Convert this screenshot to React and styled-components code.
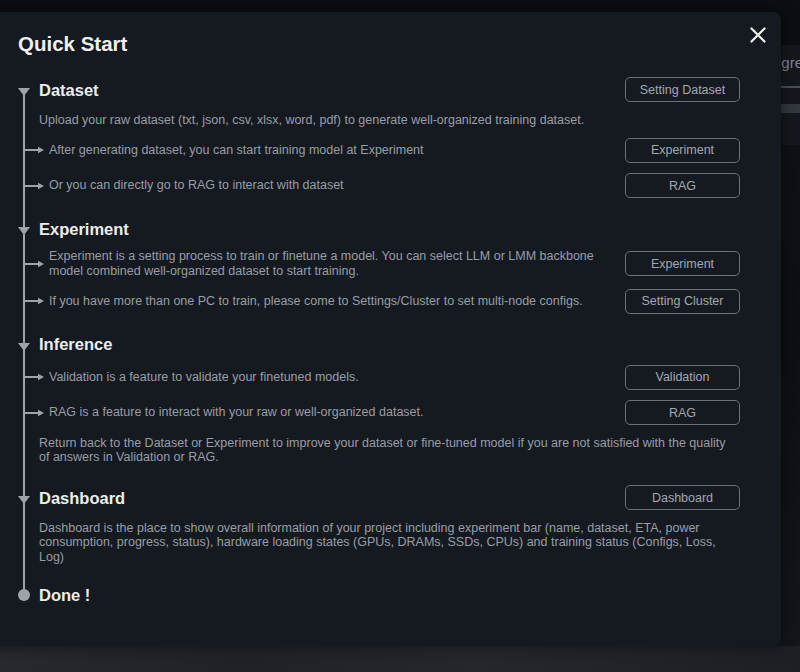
import React from 'react'
import styled, { createGlobalStyle } from 'styled-components'

const GlobalStyle = createGlobalStyle`
  html, body {
    margin: 0;
    padding: 0;
    background: #0d1015;
  }
  body {
    font-family: "Liberation Sans", Arial, sans-serif;
  }
`

// page behind the dialog
const Page = styled.div`
  position: relative;
  width: 800px;
  height: 672px;
  overflow: hidden;
  display: grid;
  grid-template-rows: 45px 100px 1fr 26px;
  background: #0d1015;
`

const TopBar = styled.div`
  background: #0b0e12;
`

const ProgressPanel = styled.div`
  background: #14181e;
  display: flex;
  flex-direction: column;
  padding: 9px 0 0 758px;
  overflow: hidden;
`

const PanelLabel = styled.div`
  font-size: 15px;
  color: #80848b;
  white-space: nowrap;
`

const PanelRule = styled.div`
  height: 2px;
  margin-top: 15px;
  background: #4a4f56;
`

const PanelBar = styled.div`
  height: 9px;
  margin-top: 16px;
  background: #33383e;
`

const Body = styled.div`
  background: linear-gradient(160deg, #10141a 0%, #0c0f13 60%, #12161b 100%);
`

const Footer = styled.div`
  background: linear-gradient(90deg, #26292d 0%, #1f2328 30%, #24282d 60%, #1c2025 100%);
`

// dialog
const Modal = styled.section`
  position: absolute;
  top: 12px;
  left: -12px;
  width: 793px;
  height: 634px;
  box-sizing: border-box;
  padding: 18px 41px 0 30px;
  background: #151a21;
  border-radius: 8px;
  box-shadow: 0 0 14px rgba(0, 0, 0, 0.55);
`

const Header = styled.header`
  display: flex;
  justify-content: space-between;
  align-items: center;
  height: 28px;
`

const Title = styled.h1`
  margin: 0;
  font-size: 20.5px;
  font-weight: bold;
  color: #f0f0f0;
  line-height: 28px;
`

const CloseButton = styled.button`
  align-self: flex-start;
  margin: -3px -26px 0 0;
  padding: 0;
  width: 16px;
  height: 16px;
  border: none;
  background: none;
  cursor: pointer;
  display: flex;
`

const Timeline = styled.div`
  position: relative;
  margin-top: 19px;
  display: flex;
  flex-direction: column;
  gap: 20.5px;

  &::before {
    content: '';
    position: absolute;
    left: 5px;
    top: 11px;
    bottom: 10px;
    width: 2px;
    background: #9ea3ac;
  }
`

const Section = styled.div`
  display: flex;
  flex-direction: column;
  gap: 10.5px;
`

const Row = styled.div`
  display: flex;
  align-items: center;
`

const Gutter = styled.div`
  flex: 0 0 ${p => (p.$wide ? 31 : 21)}px;
  display: flex;
  align-items: center;
  align-self: stretch;
`

const Heading = styled.h2`
  flex: 1;
  margin: 0;
  font-size: 16.5px;
  font-weight: bold;
  color: #ececec;
  line-height: 20px;
`

const Text = styled.p`
  flex: 1;
  margin: 0;
  padding-right: ${p => (p.$inset ? 10 : 0)}px;
  font-size: 12.5px;
  line-height: 14.5px;
  color: #999da5;
`

const StepButton = styled.button`
  flex: 0 0 115px;
  height: 25px;
  box-sizing: border-box;
  margin-left: 12px;
  border: 1.5px solid #6c7179;
  border-radius: 5px;
  background: transparent;
  color: #a3a7ae;
  font-family: "Liberation Sans", Arial, sans-serif;
  font-size: 12.5px;
  cursor: pointer;
`

const Triangle = () => (
  <svg width="12" height="8" viewBox="0 0 12 8" style={{ marginTop: 5 }}>
    <polygon points="0,0 12,0 6,8" fill="#9ea3ac" />
  </svg>
)

const Dot = () => (
  <svg width="12" height="12" viewBox="0 0 12 12">
    <circle cx="6" cy="6" r="6" fill="#9ea3ac" />
  </svg>
)

const Arrow = () => (
  <svg width="20" height="8" viewBox="0 0 20 8" style={{ marginLeft: 6 }}>
    <line x1="0" y1="4" x2="15" y2="4" stroke="#9ea3ac" strokeWidth="2" />
    <polygon points="14,0.8 20,4 14,7.2" fill="#9ea3ac" />
  </svg>
)

const CloseIcon = () => (
  <svg width="16" height="16" viewBox="0 0 16 16">
    <path d="M1.5 1.5 L14.5 14.5 M14.5 1.5 L1.5 14.5" stroke="#f2f2f2" strokeWidth="2.2" strokeLinecap="round" />
  </svg>
)

const HeadRow = ({ title, action }) => (
  <Row>
    <Gutter><Triangle /></Gutter>
    <Heading>{title}</Heading>
    {action && <StepButton>{action}</StepButton>}
  </Row>
)

const Item = ({ children, action }) => (
  <Row>
    <Gutter $wide><Arrow /></Gutter>
    <Text>{children}</Text>
    {action && <StepButton>{action}</StepButton>}
  </Row>
)

const Note = ({ children }) => (
  <Row>
    <Gutter />
    <Text $inset>{children}</Text>
  </Row>
)

export default function App() {
  return (
    <>
      <GlobalStyle />
      <Page>
        <TopBar />
        <ProgressPanel>
          <PanelLabel>Progress</PanelLabel>
          <PanelRule />
          <PanelBar />
        </ProgressPanel>
        <Body />
        <Footer />

        <Modal>
          <Header>
            <Title>Quick Start</Title>
            <CloseButton aria-label="close"><CloseIcon /></CloseButton>
          </Header>

          <Timeline>
            <Section>
              <HeadRow title="Dataset" action="Setting Dataset" />
              <Note>Upload your raw dataset (txt, json, csv, xlsx, word, pdf) to generate well-organized training dataset.</Note>
              <Item action="Experiment">After generating dataset, you can start training model at Experiment</Item>
              <Item action="RAG">Or you can directly go to RAG to interact with dataset</Item>
            </Section>

            <Section>
              <HeadRow title="Experiment" />
              <Item action="Experiment">
                Experiment is a setting process to train or finetune a model. You can select LLM or LMM backbone model combined well-organized dataset to start training.
              </Item>
              <Item action="Setting Cluster">If you have more than one PC to train, please come to Settings/Cluster to set multi-node configs.</Item>
            </Section>

            <Section>
              <HeadRow title="Inference" />
              <Item action="Validation">Validation is a feature to validate your finetuned models.</Item>
              <Item action="RAG">RAG is a feature to interact with your raw or well-organized dataset.</Item>
              <Note>
                Return back to the Dataset or Experiment to improve your dataset or fine-tuned model if you are not satisfied with the quality of answers in Validation or RAG.
              </Note>
            </Section>

            <Section>
              <HeadRow title="Dashboard" action="Dashboard" />
              <Note>
                Dashboard is the place to show overall information of your project including experiment bar (name, dataset, ETA, power consumption, progress, status), hardware loading states (GPUs, DRAMs, SSDs, CPUs) and training status (Configs, Loss, Log)
              </Note>
            </Section>

            <Row>
              <Gutter><Dot /></Gutter>
              <Heading>Done !</Heading>
            </Row>
          </Timeline>
        </Modal>
      </Page>
    </>
  )
}
